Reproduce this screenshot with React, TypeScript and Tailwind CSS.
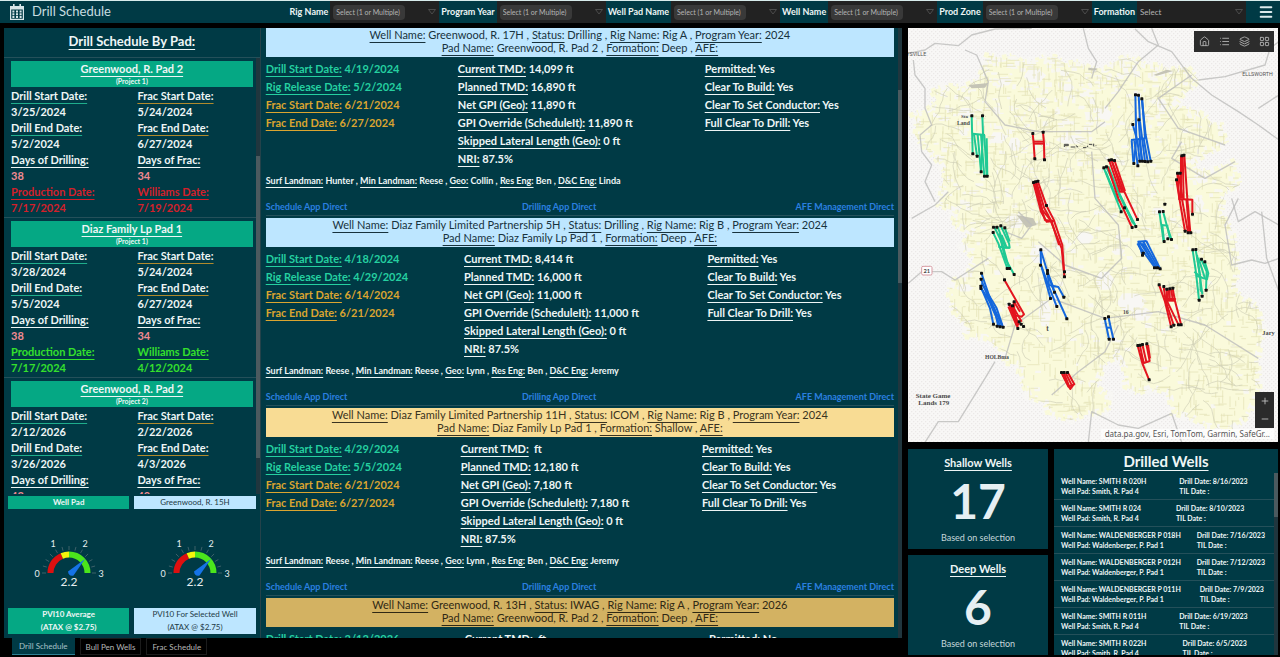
import { Home, Layers, LayoutGrid, List, Menu, Minus, Plus } from 'lucide-react'

type Line = [string, string]

const filters = [
  { label: 'Rig Name', multi: true },
  { label: 'Program Year', multi: true },
  { label: 'Well Pad Name', multi: true },
  { label: 'Well Name', multi: true },
  { label: 'Prod Zone', multi: true },
  { label: 'Formation', multi: false },
]

const pads = [
  {
    name: 'Greenwood, R. Pad 2', project: '(Project 1)', late: true,
    drill: ['3/25/2024', '5/2/2024', '38', '7/17/2024'],
    frac: ['5/24/2024', '6/27/2024', '34', '7/19/2024'],
  },
  {
    name: 'Diaz Family Lp Pad 1', project: '(Project 1)', late: false,
    drill: ['3/28/2024', '5/5/2024', '38', '7/17/2024'],
    frac: ['5/24/2024', '6/27/2024', '34', '4/12/2024'],
  },
  {
    name: 'Greenwood, R. Pad 2', project: '(Project 2)', late: false,
    drill: ['2/12/2026', '3/26/2026', '42', '6/1/2026'],
    frac: ['2/22/2026', '4/3/2026', '40', '6/1/2026'],
  },
]

const wells = [
  {
    name: 'Greenwood, R. 17H', status: 'Drilling', rig: 'Rig A', year: '2024', pad: 'Greenwood, R. Pad 2', formation: 'Deep',
    color: 'bg-[#bde6ff] text-[#17323d]', dates: ['4/19/2024', '5/2/2024', '6/21/2024', '6/27/2024'],
    tmd: ['14,099 ft', '16,890 ft', '11,890 ft', '11,890 ft'], team: ['Hunter', 'Reese', 'Collin', 'Ben', 'Linda'], ok: 'Yes',
  },
  {
    name: 'Diaz Family Limited Partnership 5H', status: 'Drilling', rig: 'Rig B', year: '2024', pad: 'Diaz Family Lp Pad 1', formation: 'Deep',
    color: 'bg-[#bde6ff] text-[#17323d]', dates: ['4/18/2024', '4/29/2024', '6/14/2024', '6/21/2024'],
    tmd: ['8,414 ft', '16,000 ft', '11,000 ft', '11,000 ft'], team: ['Reese', 'Reese', 'Lynn', 'Ben', 'Jeremy'], ok: 'Yes',
  },
  {
    name: 'Diaz Family Limited Partnership 11H', status: 'ICOM', rig: 'Rig B', year: '2024', pad: 'Diaz Family Lp Pad 1', formation: 'Shallow',
    color: 'bg-[#f8dc94] text-[#3a3320]', dates: ['4/29/2024', '5/5/2024', '6/21/2024', '6/27/2024'],
    tmd: ['\u00a0ft', '12,180 ft', '7,180 ft', '7,180 ft'], team: ['Reese', 'Reese', 'Lynn', 'Ben', 'Jeremy'], ok: 'Yes',
  },
  {
    name: 'Greenwood, R. 13H', status: 'IWAG', rig: 'Rig A', year: '2026', pad: 'Greenwood, R. Pad 2', formation: 'Deep',
    color: 'bg-[#d3b262] text-[#2f2814]', dates: ['2/12/2026', '2/20/2026', '2/22/2026', '4/3/2026'],
    tmd: ['\u00a0ft', '16,000 ft', '11,000 ft', '11,000 ft'], team: ['Reese', 'Reese', 'Lynn', 'Ben', 'Jeremy'], ok: 'No',
  },
]

const drilled = [
  ['SMITH R 020H', 'Smith, R. Pad 4', '8/16/2023'],
  ['SMITH R 024', 'Smith, R. Pad 4', '8/10/2023'],
  ['WALDENBERGER P 018H', 'Waldenberger, P. Pad 1', '7/16/2023'],
  ['WALDENBERGER P 012H', 'Waldenberger, P. Pad 1', '7/12/2023'],
  ['WALDENBERGER P 011H', 'Waldenberger, P. Pad 1', '7/9/2023'],
  ['SMITH R 011H', 'Smith, R. Pad 4', '6/19/2023'],
  ['SMITH R 022H', 'Smith, R. Pad 4', '6/5/2023'],
]

const ul = 'underline decoration-1 underline-offset-[3px] [text-decoration-skip-ink:none]'

function CalendarIcon() {
  return (
    <svg viewBox="0 0 14 16" className="h-4 w-[14px] fill-[#d7e5e8]" aria-hidden="true">
      <path d="M3 0h1.6v2h4.8V0H11v2h3v14H0V2h3zM1.2 5.4v9.4h11.6V5.4z" fillRule="evenodd" />
      <path d="M2.4 6.4h2v2h-2zM6 6.4h2v2H6zM9.6 6.4h2v2h-2zM2.4 9.2h2v2h-2zM6 9.2h2v2H6zM9.6 9.2h2v2h-2zM2.4 12h2v2h-2zM6 12h2v2H6zM9.6 12h2v2h-2z" />
    </svg>
  )
}

function Header() {
  return (
    <header className="flex h-[23px] shrink-0 items-center border-t border-[#d8ecec] bg-[#003a45] pl-[10px] pr-[6px]">
      <CalendarIcon />
      <h1 className="ml-2 text-[13px] text-[#c9dde0]">Drill Schedule</h1>
      <div className="ml-auto flex h-full items-center gap-[2px]">
        {filters.map((f) => (
          <div key={f.label} className="flex h-full items-center gap-[2px]">
            <label htmlFor={f.label} className="whitespace-nowrap text-[9px] font-bold">{f.label}</label>
            <div className="flex h-full w-[109px] items-center justify-between bg-[#222222] pl-[3px] pr-[3px]">
              <select
                id={f.label}
                className={
                  f.multi
                    ? 'h-[15px] w-[72px] appearance-none rounded-sm bg-[#393939] px-[3px] text-[7px] text-[#b4b4b4]'
                    : 'h-[15px] w-[72px] appearance-none bg-[#222222] text-[8px] text-[#b4b4b4]'
                }
              >
                <option>{f.multi ? 'Select (1 or Multiple)' : 'Select'}</option>
              </select>
              <svg viewBox="0 0 8 6" className="h-[6px] w-2 fill-none stroke-[#4c4c4c]">
                <path d="M.5.5h7L4 5z" />
              </svg>
            </div>
          </div>
        ))}
      </div>
      <button aria-label="Menu" className="ml-3">
        <Menu size={16} strokeWidth={3} className="text-[#dceaec]" />
      </button>
    </header>
  )
}

function PadColumn({ labels, values, line, late }: { labels: string[]; values: string[]; line: string; late: boolean }) {
  const end = late ? 'text-[#d3202a]' : 'text-[#35e02c]'
  return (
    <td className="p-0 align-top">
      {labels.map((label, i) => (
        <div key={label} className={i === 3 ? end : ''}>
          <div className={`${ul} ${i < 2 ? line : ''}`}>{label}</div>
          <div className={i === 2 ? 'text-[#f08a92]' : ''}>{values[i]}</div>
        </div>
      ))}
    </td>
  )
}

function Scrollbar({ before, thumb, after }: { before: string; thumb: string; after: string }) {
  return (
    <div className="flex w-1 shrink-0 flex-col bg-[#20363e]">
      <div className={before} />
      <div className={`${thumb} bg-[#4b5a5f]`} />
      <div className={after} />
    </div>
  )
}

function PadList() {
  return (
    <section className="flex min-h-0 flex-1 flex-col">
      <h2 className={`shrink-0 border-b border-[#24505a] pb-[6px] pt-[4px] text-center text-[13px] font-bold leading-[19px] ${ul}`}>
        Drill Schedule By Pad:
      </h2>
      <div className="flex min-h-0 flex-1">
        <div className="min-w-0 flex-1 overflow-hidden">
          {pads.map((p, i) => (
            <article key={i} className="border-b border-[#24505a] pb-px pl-[7px] pr-[3px] pt-[3px]">
              <div className="mb-px h-[26px] bg-[#05a884] text-center font-bold">
                <h3 className={`text-[11px] leading-[15px] ${ul}`}>{p.name}</h3>
                <p className="text-[7px] leading-[11px]">{p.project}</p>
              </div>
              <table className="w-full text-[11px] font-bold leading-4">
                <tbody>
                  <tr>
                    <PadColumn labels={['Drill Start Date:', 'Drill End Date:', 'Days of Drilling:', 'Production Date:']} values={p.drill} line="decoration-[#1fae8c]" late={p.late} />
                    <PadColumn labels={['Frac Start Date:', 'Frac End Date:', 'Days of Frac:', 'Williams Date:']} values={p.frac} line="decoration-[#b08a2c]" late={p.late} />
                  </tr>
                </tbody>
              </table>
            </article>
          ))}
        </div>
        <Scrollbar before="flex-[98]" thumb="flex-[302]" after="flex-[36]" />
      </div>
    </section>
  )
}

function polar(cx: number, cy: number, r: number, value: number) {
  const a = Math.PI * (1 - value / 3)
  return `${(cx + r * Math.cos(a)).toFixed(2)} ${(cy - r * Math.sin(a)).toFixed(2)}`
}

function arc(from: number, to: number) {
  return `M${polar(60, 50, 18.5, from)}A18.5 18.5 0 0 1 ${polar(60, 50, 18.5, to)}`
}

function Gauge() {
  const ticks = Array.from({ length: 13 }, (_, i) => i / 4)
  return (
    <svg viewBox="0 0 120 70" className="h-[70px] w-[120px] fill-none">
      {ticks.map((t) => (
        <path key={t} d={`M${polar(60, 50, 23, t)}L${polar(60, 50, 27, t)}`} stroke="#3c6069" strokeWidth="1" />
      ))}
      <path d={arc(0, 1.12)} stroke="#dd1010" strokeWidth="6" />
      <path d={arc(1.12, 1.5)} stroke="#f4f40c" strokeWidth="6" />
      <path d={arc(1.5, 3)} stroke="#4be51c" strokeWidth="6" />
      <path d="M59 48.500L76 36L64.500 52.500Q60 54 59 48.500" fill="#1573e6" />
      <g fill="#e6eef0" fontSize="9" textAnchor="middle">
        <text x="28" y="54">0</text>
        <text x="44" y="24">1</text>
        <text x="76" y="24">2</text>
        <text x="92" y="54">3</text>
        <text x="60" y="63" fontSize="12">2.2</text>
      </g>
    </svg>
  )
}

function GaugeCard({ title, caption, light }: { title: string; caption: string; light?: boolean }) {
  const tone = light ? 'bg-[#bde6ff] text-[#1d3a45]' : 'bg-[#05a884] font-bold'
  return (
    <div className="flex flex-1 flex-col text-center text-[8px]">
      <h3 className={`h-[13px] leading-[13px] ${tone}`}>{title}</h3>
      <div className="flex h-[99px] items-center justify-center pb-[1px]">
        <Gauge />
      </div>
      <p className={`h-[26px] leading-[13px] ${tone}`}>
        {caption}
        <br />
        (ATAX @ $2.75)
      </p>
    </div>
  )
}

function Field({ line }: { line: Line }) {
  return (
    <>
      <span className={ul}>{line[0]}</span> {line[1]}
    </>
  )
}

function Fields({ lines, className }: { lines: Line[]; className?: string }) {
  return (
    <p className={className}>
      {lines.map((line, i) => (
        <span key={line[0]}>
          {i > 0 && ' , '}
          <Field line={line} />
        </span>
      ))}
    </p>
  )
}

function WellCard({ well: w }: { well: (typeof wells)[number] }) {
  const dates: Line[] = [['Drill Start Date:', w.dates[0]], ['Rig Release Date:', w.dates[1]], ['Frac Start Date:', w.dates[2]], ['Frac End Date:', w.dates[3]]]
  const specs: Line[] = [['Current TMD:', w.tmd[0]], ['Planned TMD:', w.tmd[1]], ['Net GPI (Geo):', w.tmd[2]], ['GPI Override (ScheduleIt):', w.tmd[3]], ['Skipped Lateral Length (Geo):', '0 ft'], ['NRI:', '87.5%']]
  const checks: Line[] = [['Permitted:', w.ok], ['Clear To Build:', w.ok], ['Clear To Set Conductor:', w.ok], ['Full Clear To Drill:', w.ok]]
  return (
    <article className="mb-[2px] border-b border-[#24505a]">
      <div className={`h-[29px] text-center text-[11px] leading-[13px] ${w.color}`}>
        <Fields lines={[['Well Name:', w.name], ['Status:', w.status], ['Rig Name:', w.rig], ['Program Year:', w.year]]} />
        <Fields lines={[['Pad Name:', w.pad], ['Formation:', w.formation], ['AFE:', '']]} />
      </div>
      <table className="mt-[3px] w-full whitespace-nowrap text-[11px] font-bold leading-[18px]">
        <tbody>
          <tr className="align-top">
            <td className="p-0">
              {dates.map((l, i) => (
                <div key={l[0]} className={i < 2 ? 'text-[#25d0a0]' : 'text-[#dba530]'}><Field line={l} /></div>
              ))}
            </td>
            <td className="p-0">{specs.map((l) => <div key={l[0]}><Field line={l} /></div>)}</td>
            <td className="p-0">{checks.map((l) => <div key={l[0]}><Field line={l} /></div>)}</td>
          </tr>
        </tbody>
      </table>
      <Fields
        className="mt-[5px] text-[9px] font-bold leading-4"
        lines={[['Surf Landman:', w.team[0]], ['Min Landman:', w.team[1]], ['Geo:', w.team[2]], ['Res Eng:', w.team[3]], ['D&C Eng:', w.team[4]]]}
      />
      <table className="mt-[10px] w-full text-[9px] font-bold leading-4 text-[#2b80e0]">
        <tbody>
          <tr>
            <td className="p-0"><a href="#schedule">Schedule App Direct</a></td>
            <td className="p-0 text-center"><a href="#drilling">Drilling App Direct</a></td>
            <td className="p-0 text-right"><a href="#afe">AFE Management Direct</a></td>
          </tr>
        </tbody>
      </table>
    </article>
  )
}

const parcels =
  'M80 200L120 180L170 185L220 165L245 90L290 98L330 90L352 112L400 105L420 92L450 95L480 115L520 110L560 130L600 130L650 98L690 95L720 118L760 120L800 132L850 125L880 165L870 180L830 215L815 235L830 250L870 255L900 270L925 300L950 300L965 355L940 370L910 385L870 410L880 440L940 430L990 405L1005 480L960 500L950 560L985 625L1000 725L990 800L1060 845L1075 915L1060 1005L1065 1095L1030 1175L980 1215L900 1205L860 1180L800 1165L790 1105L740 1090L700 1105L660 1085L655 1020L630 1000L600 1015L575 1085L612 1110L610 1160L540 1170L500 1185L430 1170L420 1135L370 1115L340 1045L345 1020L300 1015L290 975L240 940L175 935L190 900L150 875L130 810L140 765L185 755L205 700L170 665L195 620L140 600L150 560L100 540L120 440L90 400L50 360L30 330L35 290L20 270L70 250L95 225Z'

const roads = [
  'M10 85L60 75L90 55L160 62L200 30L270 12L380 10', 'M25 105L30 150L60 190L60 250L80 300L45 330L50 380L80 420L60 470L90 530',
  'M180 75L215 90L250 170L240 230L300 300L400 320L560 320L600 290', 'M535 10L550 70L575 110L560 160', 'M690 12L730 50L800 80L860 160L920 210L1000 260L1060 300L1122 345',
  'M880 165L960 155L1080 120L1095 70L1122 50', 'M740 10L760 60L700 110L640 200L600 250', 'M860 150L760 220L820 310L960 360', 'M10 775L50 740L110 740L150 765L250 700',
  'M270 1010L240 1060L160 1190L100 1190L60 1252', 'M550 1252L560 1160L640 1200L700 1210L800 1165L830 1252', 'M1122 700L1080 715L1040 705L980 720L960 600L1000 520',
  'M340 560L380 600L350 640L300 620', 'M560 380L570 520L640 600L650 700L590 760L480 720L400 650', 'M300 1000L330 900L440 820L600 880L760 860L900 900L1060 1000',
  'M440 1110L520 1040L600 980L640 900', 'M1060 250L1122 210', 'M20 580L90 540L130 500', 'M980 520L1000 590L1050 560L1122 600', 'M1070 560L1085 700L1122 800', 'M830 350L800 400L900 460L990 410',
]

const clearings = [
  [185, 265, 26, 16], [300, 170, 22, 14], [390, 155, 34, 20], [280, 340, 26, 18], [330, 360, 20, 22], [410, 230, 26, 12], [490, 190, 18, 14], [600, 270, 24, 16],
  [770, 240, 16, 18], [500, 345, 48, 14], [330, 590, 30, 24], [400, 690, 26, 30], [470, 660, 32, 18], [680, 835, 46, 30], [710, 870, 34, 22], [600, 770, 28, 30],
  [540, 640, 26, 20], [420, 870, 20, 42], [890, 460, 20, 18], [880, 540, 18, 24], [640, 1020, 22, 30], [640, 680, 20, 12], [180, 790, 26, 12], [760, 560, 20, 14],
]

const bores = [
  { color: '#20c994', lines: ['M200 272L203 386', 'M232 272L234 325L228 440', 'M203 326L240 330', 'M207 328L216 393', 'M218 328L228 440', 'M228 330L238 453', 'M238 330L245 453', 'M245 340L247 453'] },
  { color: '#e3151f', lines: ['M383 325L386 355L389 401', 'M414 321L417 355L418 404', 'M386 350L417 350', 'M386 356L417 356'] },
  { color: '#1467dc', lines: ['M691 209L694 345L686 415', 'M701 210L705 290L720 409', 'M710 221L722 330L737 408', 'M683 298L695 340', 'M701 284L710 409', 'M678 345L722 340', 'M680 346L685 410', 'M688 346L698 420', 'M697 344L704 408', 'M703 344L712 408', 'M716 340L728 409', 'M712 225L720 340'] },
  { color: '#e3151f', lines: ['M385 472L408 560L425 590L446 588', 'M391 470L412 555L436 585L470 670L477 740', 'M398 468L424 541L446 584L472 660L478 755', 'M388 478L420 585L446 588', 'M394 472L418 550L440 590L462 660'] },
  { color: '#20c994', lines: ['M596 428L648 558', 'M604 426L650 520L692 604', 'M610 424L640 500L684 595', 'M602 440L640 530', 'M640 505L660 545L690 600'] },
  { color: '#e3151f', lines: ['M612 405L645 500L658 500L697 583', 'M619 404L650 498', 'M628 405L660 498', 'M608 425L640 520L681 607', 'M622 412L655 495', 'M658 500L640 480'] },
  { color: '#20c994', lines: ['M763 560L776 650', 'M774 559L785 600L799 642', 'M770 600L790 602', 'M772 600L777 648', 'M786 602L795 640'] },
  { color: '#e3151f', lines: ['M833 390L836 523', 'M828 392L828 520', 'M817 444L823 520L840 618', 'M814 464L823 520', 'M820 522L862 524L862 567', 'M838 392L847 522L856 622', 'M831 522L849 622', 'M844 522L853 622', 'M820 445L833 520'] },
  { color: '#20c994', lines: ['M264 622L280 655L307 730', 'M268 606L292 656L312 730', 'M278 606L300 664', 'M287 602L312 655L314 668L296 668', 'M299 608L314 650', 'M283 625L300 700L327 748', 'M290 630L305 668', 'M280 665L314 668'] },
  { color: '#1467dc', lines: ['M407 674L408 720L430 780', 'M407 674L427 740L446 790', 'M427 740L432 780L460 786L476 815', 'M408 720L436 818', 'M430 780L455 844', 'M440 780L485 880', 'M428 745L448 801'] },
  { color: '#1467dc', lines: ['M229 744L262 840L294 906', 'M228 762L262 850L287 905', 'M227 785L255 850L265 897', 'M227 788L268 850L280 905', 'M230 775L275 850L292 900'] },
  { color: '#e3151f', lines: ['M298 764L357 868L350 875L325 870', 'M327 830L345 860', 'M312 837L330 880L338 908', 'M322 842L350 890', 'M317 840L342 900', 'M326 848L338 905', 'M310 845L335 902', 'M326 830L330 885'] },
  { color: '#1467dc', lines: ['M698 650L725 648', 'M697 655L748 725', 'M705 652L755 728', 'M715 650L760 728', 'M724 648L765 730', 'M700 648L712 690', 'M712 655L745 715', 'M700 660L712 682'] },
  { color: '#20c994', lines: ['M863 676L872 735L882 824', 'M872 674L885 750L887 800', 'M889 703L905 740L903 794', 'M899 710L910 745L906 763L872 752', 'M868 740L890 758', 'M876 690L892 808', 'M880 698L900 760'] },
  { color: '#e3151f', lines: ['M762 779L780 830L798 904', 'M776 785L782 828L806 900', 'M785 792L785 826L820 898', 'M794 790L794 826', 'M803 790L810 828L828 898', 'M778 827L812 827', 'M778 822L812 822', 'M790 795L788 822', 'M799 792L803 825'] },
  { color: '#1467dc', lines: ['M599 880L612 942', 'M610 875L625 942', 'M604 908L618 908'] },
  { color: '#e3151f', lines: ['M698 962L712 1015L732 1064', 'M705 962L716 1015', 'M712 958L724 1010', 'M724 957L734 1008L714 1015', 'M706 985L716 1012', 'M729 960L735 1000'] },
  { color: '#e3151f', lines: ['M469 1042L490 1085L508 1078L488 1042', 'M476 1042L495 1090', 'M482 1044L502 1084', 'M472 1048L496 1092L505 1080'] },
]

// Hand placed surface and bottom hole points
const holes =
  '200,272 232,272 203,386 216,393 228,440 238,453 246,453 383,325 414,321 389,401 418,404 691,209 700,210 710,221 683,298 701,284 686,415 698,422 704,408 712,408 720,409 728,410 737,408 385,472 391,470 398,468 424,541 478,740 478,755 596,428 604,425 612,405 619,404 628,406 648,560 658,548 681,607 692,604 697,583 779,537 763,560 774,559 777,649 788,641 799,643 830,392 836,390 817,444 825,444 814,464 862,567 840,618 849,623 857,623 264,622 265,606 275,606 287,602 299,608 306,730 313,730 327,748 407,674 406,720 427,736 427,745 436,820 448,801 455,844 476,816 485,881 229,744 228,762 227,783 227,790 265,897 276,903 285,905 294,906 298,764 327,830 312,837 322,842 338,910 342,890 348,897 355,904 712,690 714,684 748,728 757,728 765,731 863,674 872,673 889,702 899,710 903,795 891,813 882,825 762,779 776,784 785,792 794,791 803,789 798,905 806,900 820,899 828,899 599,880 610,875 612,942 625,942 698,961 705,960 712,958 725,956 732,1064 469,1042 477,1042 487,1042'

function seeded(seed: number) {
  let s = seed
  return () => {
    s = (s * 16807) % 2147483647
    return s / 2147483647
  }
}

function parcelLines() {
  const rnd = seeded(42)
  let fine = ''
  let lanes = ''
  let gaps = ''
  for (let i = 0; i < 2600; i++) {
    const x = Math.round(10 + rnd() * 1080)
    const y = Math.round(80 + rnd() * 1140)
    const len = Math.round(8 + rnd() * 34)
    fine += rnd() > 0.5 ? `M${x} ${y}h${len}` : `M${x} ${y}v${len}`
  }
  for (let i = 0; i < 330; i++) {
    let x = 10 + rnd() * 1080
    let y = 80 + rnd() * 1140
    let a = rnd() * Math.PI * 2
    lanes += `M${x.toFixed(0)} ${y.toFixed(0)}`
    for (let k = 0; k < 6; k++) {
      a += (rnd() - 0.5) * 1.1
      x += Math.cos(a) * 19
      y += Math.sin(a) * 19
      lanes += `L${x.toFixed(0)} ${y.toFixed(0)}`
    }
  }
  // Unleased gaps thin out towards the south
  for (let i = 0; i < 900; i++) {
    const x = Math.round(10 + rnd() * 1080)
    const y = Math.round(80 + rnd() * rnd() * 1140)
    const w = Math.round(5 + rnd() * 16)
    const h = Math.round(4 + rnd() * 11)
    gaps += `M${x} ${y}h${w}l${Math.round(rnd() * 6 - 3)} ${h}h${-w}z`
  }
  return { fine, lanes, gaps }
}

const { fine, lanes, gaps } = parcelLines()

function WellMap() {
  return (
    <svg viewBox="9 9 1110 1242" preserveAspectRatio="xMidYMid slice" className="block h-full w-full fill-none">
      <defs>
        <pattern id="dots" width="12" height="12" patternUnits="userSpaceOnUse">
          <path d="M0 0h4v4H0zM6 6h4v4H6z" fill="#ebe8e7" />
        </pattern>
        <clipPath id="parcels">
          <path d={parcels} />
        </clipPath>
      </defs>
      <rect x="0" y="0" width="1130" height="1260" fill="#f8f7f6" />
      <rect x="0" y="0" width="1130" height="1260" fill="url(#dots)" />
      <path d={parcels} fill="#fafadb" />
      <path d={parcels} stroke="#f8f7f4" strokeWidth="26" strokeDasharray="9 15 20 8 6 24" />
      <path d={parcels} stroke="#fafadb" strokeWidth="16" strokeDasharray="14 10 5 26" />
      <g clipPath="url(#parcels)">
        <path d={gaps} fill="#f8f7f2" />
        {clearings.map(([x, y, rx, ry]) => (
          <path key={`${x}-${y}`} d={`M${x - rx} ${y}l${rx * 0.4} ${-ry}h${rx}l${rx * 0.6} ${ry * 0.8}l${-rx * 0.5} ${ry}h${-rx}z`} fill="#f8f7f4" />
        ))}
        <path d={fine} stroke="#e2e1b4" strokeWidth="2" />
        <path d={lanes} stroke="#cfceb6" strokeWidth="2" />
        <path d="M190 180l60-6l-10 14l-40 2zM335 570l50 10l10 20l-30 8zM745 150l40-16l20 4l-50 14zM550 128h25v8h-25zM830 98l16 6l-8 8z" fill="#c5c4b6" />
      </g>
      {roads.map((d) => (
        <path key={d} d={d} stroke="#bdbdbb" strokeWidth="4" strokeLinejoin="round" opacity="0.8" />
      ))}
      {bores.map((b, i) => (
        <g key={i} stroke={b.color} strokeWidth="6" strokeLinejoin="round">
          {b.lines.map((d) => <path key={d} d={d} />)}
        </g>
      ))}
      {holes.split(' ').map((h) => {
        const [x, y] = h.split(',').map(Number)
        return <rect key={h} x={x - 4} y={y - 4} width="9" height="9" rx="2" fill="#111" />
      })}
      <g fill="#4a4a4a" fontSize="21" fontFamily="Liberation Serif, serif" fontWeight="bold">
        <text x="32" y="1118">State Game</text>
        <text x="40" y="1139">Lands 179</text>
        <text x="168" y="279" fontSize="15">Sta</text>
        <text x="156" y="299" fontSize="17">Land</text>
        <text x="240" y="1003" fontSize="17">HOLBma</text>
        <text x="1072" y="929" fontSize="19">Jary</text>
        <text x="654" y="866" fontSize="17">16</text>
        <text x="424" y="917" fontSize="22">t</text>
      </g>
      <path d="M478 366v-8h12v4h-10M497 366h14M513 362l6 4M534 368h10M548 362v4M552 358h10M566 356v8M572 362h2" stroke="#444" strokeWidth="3" />
      <g fill="#555" fontSize="18" fontFamily="Roboto, sans-serif">
        <text x="4" y="92" fontSize="16">YSVILLE</text>
        <text x="1012" y="152" fontSize="16">ELLSWORTH</text>
      </g>
      <rect x="50" y="724" width="31" height="26" rx="4" fill="#fff" stroke="#d79aa2" strokeWidth="3" />
      <text x="65" y="744" fill="#444" fontSize="17" fontWeight="bold" textAnchor="middle">21</text>
    </svg>
  )
}

function MapPanel() {
  const tools = [
    { name: 'Home', Icon: Home },
    { name: 'Legend', Icon: List },
    { name: 'Layers', Icon: Layers },
    { name: 'Basemaps', Icon: LayoutGrid },
  ]
  return (
    <section className="relative min-h-0 flex-[414] overflow-hidden">
      <div className="absolute inset-0">
        <WellMap />
      </div>
      <div className="absolute right-[4px] top-[3px] flex h-[21px] items-center bg-[#2c2c2c]">
        {tools.map(({ name, Icon }) => (
          <button key={name} aria-label={name} className="flex w-5 justify-center text-[#b0b0b0]">
            <Icon size={11} strokeWidth={2} />
          </button>
        ))}
      </div>
      <div className="absolute bottom-[14px] right-[4px] flex w-[19px] flex-col bg-[#2b2b2b] text-[#c8c8c8]">
        <button aria-label="Zoom in" className="flex h-[18px] items-center justify-center"><Plus size={10} /></button>
        <button aria-label="Zoom out" className="flex h-[18px] items-center justify-center"><Minus size={10} /></button>
      </div>
      <p className="absolute bottom-[3px] right-[4px] bg-white/70 px-1 font-['Noto_Sans',sans-serif] text-[8px] leading-[10px] text-[#555]">
        data.pa.gov, Esri, TomTom, Garmin, SafeGr...
      </p>
    </section>
  )
}

function Stat({ title, value }: { title: string; value: number }) {
  return (
    <section className="flex flex-1 flex-col items-center justify-between bg-[#003a45] pb-[3px] pt-[6px]">
      <h2 className={`text-[11px] font-bold leading-4 ${ul}`}>{title}</h2>
      <strong className="text-[48px] leading-[48px] text-[#e6eff3]">{value}</strong>
      <span className="text-[9px] leading-4 text-[#c5d6da]">Based on selection</span>
    </section>
  )
}

function DrilledWells() {
  return (
    <section className="flex min-w-0 flex-[224] flex-col overflow-hidden bg-[#003a45]">
      <h2 className={`text-center text-[15px] font-bold leading-6 ${ul}`}>Drilled Wells</h2>
      <div className="flex min-h-0 flex-1">
        <div className="min-w-0 flex-1 overflow-hidden">
          {drilled.map(([name, pad, date]) => (
            <div key={name} className="border-b border-[#24505a] pl-[7px]">
              <table className="h-[26px] w-full whitespace-nowrap text-[7px] font-bold leading-[10px]">
                <tbody>
                  <tr>
                    <td className="p-0">Well Name: {name}<br />Well Pad: {pad}</td>
                    <td className="p-0">Drill Date: {date}<br />TIL Date :</td>
                  </tr>
                </tbody>
              </table>
            </div>
          ))}
        </div>
        <Scrollbar before="flex-none" thumb="flex-[44]" after="flex-[138]" />
      </div>
    </section>
  )
}

export default function App() {
  return (
    <div className="flex h-screen flex-col overflow-hidden bg-black font-['Lato',sans-serif] text-[#eef6f6]">
      <Header />
      <main className="flex min-h-0 flex-1 gap-[6px] pl-1 pr-[2px] pt-[5px]">
        <div className="flex min-w-0 flex-[898] flex-col">
          <div className="flex min-h-0 flex-1">
            <div className="flex min-w-0 flex-[256] flex-col bg-[#003a45]">
              <PadList />
              <div className="flex gap-[5px] px-1 pb-1 pt-[2px]">
                <GaugeCard title="Well Pad" caption="PVI10 Average" />
                <GaugeCard title="Greenwood, R. 15H" caption="PVI10 For Selected Well" light />
              </div>
            </div>
            <section className="flex min-w-0 flex-[642] overflow-hidden border-l border-[#24424a] bg-[#003a45]">
              <div className="min-w-0 flex-1 pl-[5px] pr-1">
                {wells.map((w) => <WellCard key={w.name} well={w} />)}
              </div>
              <Scrollbar before="flex-[62]" thumb="flex-[193]" after="flex-[355]" />
            </section>
          </div>
          <nav className="flex h-[19px] gap-[5px] pb-[2px] pl-2 text-[8px]">
            <button className="border-b border-[#2d7f93] bg-[#003a45] px-[7px] text-[#a9c3c9]">Drill Schedule</button>
            <button className="border border-[#1c1c1c] px-[5px] text-[#b8b8b8]">Bull Pen Wells</button>
            <button className="border border-[#1c1c1c] px-[5px] text-[#b8b8b8]">Frac Schedule</button>
          </nav>
        </div>
        <div className="flex min-w-0 flex-[370] flex-col gap-[7px] pb-[2px]">
          <MapPanel />
          <div className="flex min-h-0 flex-[206] gap-[6px]">
            <div className="flex flex-[140] flex-col gap-[6px]">
              <Stat title="Shallow Wells" value={17} />
              <Stat title="Deep Wells" value={6} />
            </div>
            <DrilledWells />
          </div>
        </div>
      </main>
    </div>
  )
}
